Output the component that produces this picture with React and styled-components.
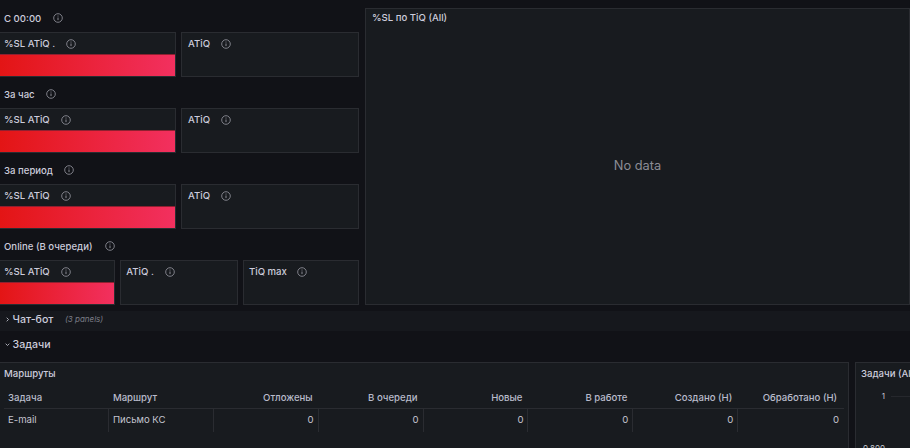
import styled, { createGlobalStyle } from "styled-components";

const GlobalStyle = createGlobalStyle`
  html, body {
    margin: 0;
    padding: 0;
    width: 910px;
    height: 448px;
    overflow: hidden;
    background: #111217;
  }
  * { box-sizing: border-box; }
`;

const Page = styled.div`
  width: 910px;
  height: 448px;
  overflow: hidden;
  background: #111217;
  color: #ccccdc;
  font-family: Inter, "Noto Sans", sans-serif;
  font-size: 9.6px;
  font-weight: 500;
`;

const TopGrid = styled.div`
  display: flex;
  gap: 6px;
  margin-left: -1px;
  padding-top: 8px;
`;

const LeftColumn = styled.div`
  width: 360px;
  flex: none;
`;

const Group = styled.section`
  margin-bottom: 7px;
  &:last-child { margin-bottom: 0; }
`;

const GroupTitle = styled.div`
  height: 20px;
  margin-bottom: 4px;
  padding-left: 5px;
  display: flex;
  align-items: center;
  gap: ${(p) => p.$gap || 10}px;
`;

const PanelRow = styled.div`
  display: grid;
  grid-template-columns: ${(p) => p.$cols};
  gap: ${(p) => p.$gap || 5}px;
`;

const Panel = styled.div`
  height: 45px;
  background: #181b1f;
  border: 1px solid #2a2c31;
  display: flex;
  flex-direction: column;
`;

const PanelHead = styled.div`
  height: 21px;
  flex: none;
  padding-left: ${(p) => p.$pad || 5}px;
  display: flex;
  align-items: center;
  gap: ${(p) => p.$gap || 10}px;
`;

const Bar = styled.div`
  flex: 1;
  background: linear-gradient(90deg, #e31515, #f2305f);
  border-top: 1px solid #8f2030;
`;

const BigPanel = styled.div`
  width: 545px;
  flex: none;
  height: 297px;
  background: #181b1f;
  border: 1px solid #2a2c31;
  display: flex;
  flex-direction: column;
`;

const BigHead = styled.div`
  height: 17px;
  flex: none;
  padding-left: 6px;
  display: flex;
  align-items: center;
`;

const NoData = styled.div`
  flex: 1;
  display: flex;
  align-items: center;
  justify-content: center;
  font-size: 12.8px;
  font-weight: 400;
  color: #8b8c95;
`;

const CollapsedRow = styled.div`
  height: 20px;
  margin-top: 6px;
  padding-left: 5px;
  padding-bottom: 4px;
  background: #16181d;
  display: flex;
  align-items: center;
  font-size: 10.6px;
`;

const OpenRow = styled.div`
  height: 20px;
  margin-top: 3px;
  padding-left: 5px;
  display: flex;
  align-items: center;
  font-size: 10.6px;
`;

const Chevron = styled.svg`
  width: 5px;
  height: 5px;
  margin-right: 2.5px;
  flex: none;
  fill: none;
  stroke: #c4c5d0;
  stroke-width: 1;
`;

const PanelCount = styled.span`
  margin-left: 11.5px;
  font-size: 8px;
  font-weight: 400;
  font-style: italic;
  color: #7a7c86;
`;

const BottomGrid = styled.div`
  display: flex;
  gap: 6px;
  margin-left: -1px;
  margin-top: 8px;
`;

const TablePanel = styled.div`
  width: 850px;
  flex: none;
  height: 120px;
  background: #181b1f;
  border: 1px solid #2a2c31;
  padding: 0 4px;
`;

const TableTitle = styled.div`
  height: 20px;
  display: flex;
  align-items: center;
  margin-bottom: 6px;
`;

const Row = styled.div`
  display: grid;
  grid-template-columns: repeat(8, 104.9px);
  width: 840px;
  height: ${(p) => p.$height}px;
`;

const HeadRow = styled(Row)`
  border-bottom: 1px solid #2a2c31;
`;

const HeadCell = styled.div`
  display: flex;
  align-items: center;
  justify-content: ${(p) => (p.$right ? "flex-end" : "flex-start")};
  padding: 0 ${(p) => (p.$right ? 6 : 4)}px 2px;
  color: #b9bbcb;
`;

const Cell = styled.div`
  display: flex;
  align-items: center;
  justify-content: ${(p) => (p.$right ? "flex-end" : "flex-start")};
  padding: 0 4px 2px;
  font-weight: 400;
  color: #c4c5d0;
  border-right: 1px solid #2a2c31;
  &:last-child { border-right: none; }
`;

const ChartPanel = styled.div`
  width: 70px;
  flex: none;
  height: 120px;
  background: #181b1f;
  border: 1px solid #2a2c31;
  padding-left: 5px;
  white-space: nowrap;
  overflow: hidden;
`;

const ChartTitle = styled.div`
  height: 20px;
  display: flex;
  align-items: center;
`;

const AxisRow = styled.div`
  display: flex;
  align-items: center;
  gap: 6px;
  height: 12px;
  margin-top: ${(p) => p.$top}px;
  font-size: 8px;
  font-weight: 400;
  color: #c4c5d0;
`;

const AxisLabel = styled.span`
  width: 24px;
  text-align: right;
`;

const GridLine = styled.div`
  flex: 1;
  height: 1px;
  background: #26282d;
`;

const InfoSvg = styled.svg`
  width: 10px;
  height: 10px;
  flex: none;
  fill: none;
  stroke: #8a8b94;
`;

const Info = () => (
  <InfoSvg viewBox="0 0 10 10">
    <circle cx="5" cy="5" r="4.3" strokeWidth="0.9" />
    <path d="M5 4.5v2.6M5 2.6v.9" strokeWidth="1" />
  </InfoSvg>
);

const headers = ["Задача", "Маршрут", "Отложены", "В очереди", "Новые", "В работе", "Создано (Н)", "Обработано (Н)"];
const values = ["E-mail", "Письмо КС", "0", "0", "0", "0", "0", "0"];

const groups = [
  { title: "С 00:00", gap: 11.5, first: "%SL ATiQ ." },
  { title: "За час", gap: 11, first: "%SL ATiQ" },
  { title: "За период", gap: 10.5, first: "%SL ATiQ" },
];

export default function App() {
  return (
    <Page>
      <GlobalStyle />
      <TopGrid>
        <LeftColumn>
          {groups.map((g) => (
            <Group key={g.title}>
              <GroupTitle $gap={g.gap}>
                {g.title}
                <Info />
              </GroupTitle>
              <PanelRow $cols="177px 178px">
                <Panel>
                  <PanelHead $pad={4} $gap={11}>
                    {g.first}
                    <Info />
                  </PanelHead>
                  <Bar />
                </Panel>
                <Panel>
                  <PanelHead $pad={6} $gap={10.5}>
                    ATiQ
                    <Info />
                  </PanelHead>
                </Panel>
              </PanelRow>
            </Group>
          ))}
          <Group>
            <GroupTitle $gap={12}>
              Online (В очереди)
              <Info />
            </GroupTitle>
            <PanelRow $cols="116px 117.33px 116px" $gap={5.33}>
              <Panel>
                <PanelHead $pad={4} $gap={11}>
                  %SL ATiQ
                  <Info />
                </PanelHead>
                <Bar />
              </Panel>
              <Panel>
                <PanelHead $pad={5} $gap={11}>
                  ATiQ .
                  <Info />
                </PanelHead>
              </Panel>
              <Panel>
                <PanelHead $pad={5} $gap={10.5}>
                  TiQ max
                  <Info />
                </PanelHead>
              </Panel>
            </PanelRow>
          </Group>
        </LeftColumn>
        <BigPanel>
          <BigHead>%SL по TiQ (All)</BigHead>
          <NoData>No data</NoData>
        </BigPanel>
      </TopGrid>

      <CollapsedRow>
        <Chevron viewBox="0 0 6 6">
          <path d="M2 .8 4.2 3 2 5.2" />
        </Chevron>
        Чат-бот
        <PanelCount>(3 panels)</PanelCount>
      </CollapsedRow>
      <OpenRow>
        <Chevron viewBox="0 0 6 6">
          <path d="M.8 2 3 4.2 5.2 2" />
        </Chevron>
        Задачи
      </OpenRow>

      <BottomGrid>
        <TablePanel>
          <TableTitle>Маршруты</TableTitle>
          <HeadRow $height={20}>
            {headers.map((h, i) => (
              <HeadCell key={h} $right={i > 1}>
                {h}
              </HeadCell>
            ))}
          </HeadRow>
          <Row $height={23}>
            {values.map((v, i) => (
              <Cell key={i} $right={i > 1}>
                {v}
              </Cell>
            ))}
          </Row>
        </TablePanel>
        <ChartPanel>
          <ChartTitle>Задачи (All)</ChartTitle>
          <AxisRow $top={7}>
            <AxisLabel>1</AxisLabel>
            <GridLine />
          </AxisRow>
          <AxisRow $top={40}>
            <AxisLabel>0.800</AxisLabel>
            <GridLine />
          </AxisRow>
        </ChartPanel>
      </BottomGrid>
    </Page>
  );
}
